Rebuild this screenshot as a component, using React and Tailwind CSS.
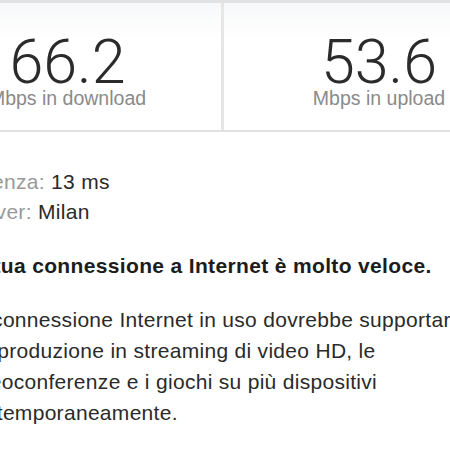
export default function App() {
  const sans = { fontFamily: '"Liberation Sans", Arial, sans-serif' };
  return (
    <div className="w-[450px] h-[450px] overflow-hidden bg-white relative" style={sans}>
      <div className="ml-[-86px] w-[622px] flex border-t-[3px] border-b-2 border-[#e2e2e2] h-[132px] bg-gradient-to-b from-[#f7f8f9] to-white to-[30%]">
        <div className="w-[310px] border-r-[3px] border-[#e6e6e6] flex flex-col items-center pt-[33px]">
          <div className="text-[61px] leading-[52px] font-light text-[#2b2b2b]" style={{ fontFamily: 'Roboto, "Liberation Sans", sans-serif' }}>66.2</div>
          <div className="text-[19.5px] leading-none mt-[1px] text-[#8a8a8a]">Mbps in download</div>
        </div>
        <div className="w-[310px] flex flex-col items-center pt-[33px]">
          <div className="text-[61px] leading-[52px] font-light text-[#2b2b2b]" style={{ fontFamily: 'Roboto, "Liberation Sans", sans-serif' }}>53.6</div>
          <div className="text-[19.5px] leading-none mt-[1px] text-[#8a8a8a]">Mbps in upload</div>
        </div>
      </div>
      <div className="ml-[-38px] whitespace-nowrap text-[21px] tracking-[0.3px] text-[#2a2a2a]">
        <div className="mt-[35px] leading-[30px]">
          <div><span className="text-[#999]">Latenza:</span> 13 ms</div>
          <div><span className="text-[#999]">Server:</span> Milan</div>
        </div>
        <div className="mt-[24px] leading-[30px] font-bold tracking-[0.35px] text-[#1c1c1c]">La tua connessione a Internet è molto veloce.</div>
        <div className="mt-[23px] leading-[31px]">
          La connessione Internet in uso dovrebbe supportare<br />
          la riproduzione in streaming di video HD, le<br />
          videoconferenze e i giochi su più dispositivi<br />
          contemporaneamente.
        </div>
      </div>
    </div>
  );
}
